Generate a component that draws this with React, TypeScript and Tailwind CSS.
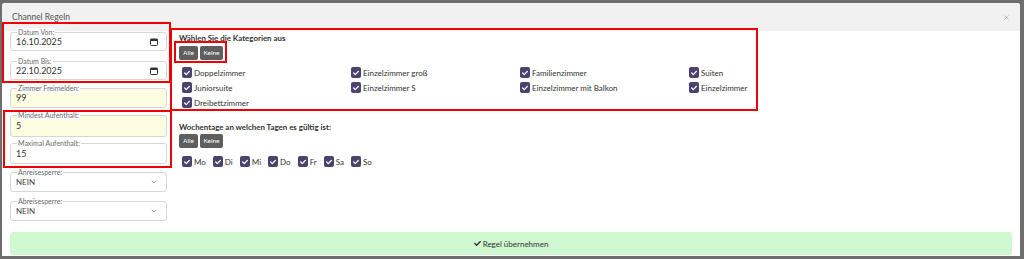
import React from "react";
import { FaCheck } from "react-icons/fa";
import { ChevronDown, X } from "lucide-react";

function Calendar() {
  return (
    <svg width="8" height="8" viewBox="0 0 8 8" className="shrink-0">
      <rect x="0.5" y="1" width="7" height="6.5" rx="0.8" fill="none" stroke="#333" strokeWidth="1" />
      <rect x="0.5" y="1" width="7" height="2" fill="#333" />
    </svg>
  );
}

function Field({
  label,
  value,
  yellow,
  icon,
  small,
  className,
}: {
  label: string;
  value: string;
  yellow?: boolean;
  icon?: React.ReactNode;
  small?: boolean;
  className: string;
}) {
  return (
    <div
      className={`relative w-[157px] rounded-[3px] border border-[#d6d6d6] flex items-center pl-[5px] pr-[8px] ${
        yellow ? "bg-[#fdfde2]" : "bg-white"
      } ${className}`}
    >
      <span className="absolute left-[6px] top-[-5px] bg-white px-[1px] text-[7px] leading-[9px] text-[#6a6a6a]">
        {label}
      </span>
      <span className={`flex-1 ${small ? "text-[8px] text-[#444]" : "text-[9px] text-[#333]"} leading-[10px]`}>{value}</span>
      {icon}
    </div>
  );
}

function Box() {
  return (
    <span className="w-[10px] h-[11px] rounded-[2px] bg-[#4b4270] flex items-center justify-center shrink-0">
      <FaCheck className="text-white" size={6} />
    </span>
  );
}

function Check({ label }: { label: string }) {
  return (
    <div className="flex items-center gap-[2px] h-[15px]">
      <Box />
      <span className="text-[8px] text-[#333] leading-[10px]">{label}</span>
    </div>
  );
}

function Buttons({ className }: { className: string }) {
  return (
    <div className={`flex gap-[2px] ${className}`}>
      <span className="w-[19px] h-[14px] rounded-[2px] bg-[#5e5e5e] text-white text-[6.5px] flex items-center justify-center">
        Alle
      </span>
      <span className="w-[23px] h-[14px] rounded-[2px] bg-[#5e5e5e] text-white text-[6.5px] flex items-center justify-center">
        Keine
      </span>
    </div>
  );
}

const cats = [
  "Doppelzimmer",
  "Einzelzimmer groß",
  "Familienzimmer",
  "Suiten",
  "Juniorsuite",
  "Einzelzimmer S",
  "Einzelzimmer mit Balkon",
  "Einzelzimmer",
  "Dreibettzimmer",
];

const days = ["Mo", "Di", "Mi", "Do", "Fr", "Sa", "So"];

export default function App() {
  return (
    <div className="relative w-[1024px] h-[259px] overflow-hidden bg-[#6e6e6e] pt-[3px] pl-[2px] font-['Lato',sans-serif]">
      <div className="w-[1018px] h-[253px] bg-white rounded-t-[3px] flex flex-col overflow-hidden">
        <div className="h-[28px] bg-[#f1f1f1] flex items-center justify-between pl-[10px] pr-[10px] shrink-0">
          <span className="text-[8.5px] text-[#555]">Channel Regeln</span>
          <X size={7} className="text-[#9a9a9a]" strokeWidth={2} />
        </div>
        <div className="flex pl-[8px] flex-1">
          <div className="flex flex-col w-[157px] pt-[1px]">
            <Field className="h-[19px]" label="Datum Von:" value="16.10.2025" icon={<Calendar />} />
            <Field className="h-[19px] mt-[10px]" label="Datum Bis:" value="22.10.2025" icon={<Calendar />} />
            <Field className="h-[20px] mt-[8px]" label="Zimmer Freimelden:" value="99" yellow />
            <Field className="h-[22px] mt-[7px]" label="Mindest Aufenthalt:" value="5" yellow />
            <Field className="h-[21px] mt-[6px]" label="Maximal Aufenthalt:" value="15" />
            <Field
              className="h-[20px] mt-[8px]"
              label="Anreisesperre:"
              value="NEIN"
              small
              icon={<ChevronDown size={8} className="text-[#555]" strokeWidth={1.5} />}
            />
            <Field
              className="h-[20px] mt-[9px]"
              label="Abreisesperre:"
              value="NEIN"
              small
              icon={<ChevronDown size={8} className="text-[#555]" strokeWidth={1.5} />}
            />
          </div>
          <div className="flex flex-col ml-[12px] pt-[2px]">
            <div className="text-[7.9px] font-bold text-[#333] leading-[10px]">Wählen Sie die Kategorien aus</div>
            <Buttons className="mt-[3px]" />
            <div className="grid grid-cols-[169px_169px_169px_169px] ml-[3px] mt-[5px]">
              {cats.map((c) => (
                <Check key={c} label={c} />
              ))}
            </div>
            <div className="text-[7.9px] font-bold text-[#333] leading-[10px] mt-[12px]">
              Wochentage an welchen Tagen es gültig ist:
            </div>
            <Buttons className="mt-[2px]" />
            <div className="flex gap-[7px] ml-[3px] mt-[6px]">
              {days.map((d) => (
                <Check key={d} label={d} />
              ))}
            </div>
          </div>
        </div>
        <div className="mx-[8px] mb-[1px] h-[23px] rounded-[3px] bg-[#cff8d0] flex items-center justify-center gap-[2px] shrink-0">
          <FaCheck size={7} className="text-[#333]" />
          <span className="text-[8px] text-[#333]">Regel übernehmen</span>
        </div>
      </div>

      <div className="absolute left-[2px] top-[22px] w-[169px] h-[61px] border-2 border-[#f00000]" />
      <div className="absolute left-[3px] top-[110px] w-[169px] h-[58px] border-2 border-[#f00000]" />
      <div className="absolute left-[170px] top-[28px] w-[588px] h-[83px] border-2 border-[#f00000]" />
      <div className="absolute left-[174px] top-[41px] w-[53px] h-[22px] border-2 border-[#f00000]" />
    </div>
  );
}
